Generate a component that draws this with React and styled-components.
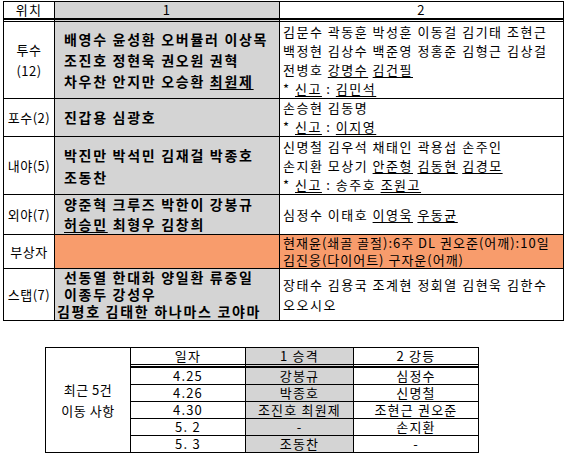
import React from "react";
import styled, { createGlobalStyle } from "styled-components";

const Global = createGlobalStyle`
  body {
    margin: 0;
    background: #fff;
    font-family: "Noto Sans CJK KR", "Noto Sans", sans-serif;
    color: #000;
  }
`;

const Page = styled.div`
  display: flex;
  flex-direction: column;
  align-items: flex-start;
  gap: 26px;
  padding: 1px 0 0 3px;
`;

const Table = styled.table`
  border-collapse: separate;
  border-spacing: 0;
  table-layout: fixed;
  width: ${(p) => p.$w}px;
  border-top: 1px solid #000;
  border-left: 1px solid #000;
  margin-left: ${(p) => p.$ml || 0}px;
  font-size: 13px;
  letter-spacing: 1.2px;
`;

const Row = styled.tr`
  height: ${(p) => p.$h}px;
`;

const Cell = styled.td`
  padding: 0;
  border-right: 1px solid #000;
  border-bottom: ${(p) => p.$bb || "1px solid #000"};
  background: ${(p) => p.$bg || "#fff"};
  vertical-align: middle;
  text-align: ${(p) => p.$align || "left"};
  line-height: ${(p) => p.$lh || 19}px;
  white-space: pre;
`;

const Gap = styled.td`
  padding: 0;
  height: 1px;
  font-size: 0;
  line-height: 0;
  border-right: 1px solid #000;
  border-bottom: ${(p) => p.$bb};
  background: ${(p) => p.$bg || "#fff"};
`;

const Pos = styled.div`
  text-align: center;
  letter-spacing: 0.5px;
  line-height: ${(p) => p.$lh || 19}px;
`;

const BoldLine = styled.div`
  font-weight: 700;
  font-size: 14px;
  letter-spacing: 1.7px;
  line-height: ${(p) => p.$lh || 21}px;
  padding-left: ${(p) => p.$pl ?? 9}px;
`;

const Line = styled.div`
  padding-left: 3px;
  letter-spacing: ${(p) => p.$ls ?? 1.5}px;
  line-height: ${(p) => p.$lh || 19}px;
`;

const U = styled.span`
  text-decoration: underline;
  text-underline-offset: 2px;
`;

const GRAY = "#d4d4d4";
const ORANGE = "#f89c6c";

const moves = [
  ["4.25", "강봉규", "심정수"],
  ["4.26", "박종호", "신명철"],
  ["4.30", "조진호 최원제", "조현근 권오준"],
  ["5. 2", "-", "손지환"],
  ["5. 3", "조동찬", "-"],
];

const App = () => {
  return (
    <>
      <Global />
      <Page>
        <Table $w={560}>
          <colgroup>
            <col style={{ width: 51 }} />
            <col style={{ width: 225 }} />
            <col style={{ width: 284 }} />
          </colgroup>
          <tbody>
            <Row $h={18}>
              <Cell $align="center" $lh={16} $bb="2px solid #000">위치</Cell>
              <Cell $align="center" $lh={16} $bg={GRAY} $bb="2px solid #000">1</Cell>
              <Cell $align="center" $lh={16} $bb="2px solid #000">2</Cell>
            </Row>
            <tr>
              <Gap $bb="1px solid #000" />
              <Gap $bb="1px solid #000" $bg={GRAY} />
              <Gap $bb="1px solid #000" />
            </tr>
            <Row $h={77}>
              <Cell>
                <Pos $lh={21}>투수</Pos>
                <Pos $lh={21}>(12)</Pos>
              </Cell>
              <Cell $bg={GRAY}>
                <BoldLine>배영수 윤성환 오버뮬러 이상목</BoldLine>
                <BoldLine>조진호 정현욱 권오원 권혁</BoldLine>
                <BoldLine>
                  차우찬 안지만 오승환 <U>최원제</U>
                </BoldLine>
              </Cell>
              <Cell>
                <Line>김문수 곽동훈 박성훈 이동걸 김기태 조현근</Line>
                <Line>백정현 김상수 백준영 정홍준 김형근 김상걸</Line>
                <Line>
                  전병호 <U>강명수</U> <U>김건필</U>
                </Line>
                <Line>
                  * <U>신고</U> : <U>김민석</U>
                </Line>
              </Cell>
            </Row>
            <Row $h={38}>
              <Cell>
                <Pos>포수(2)</Pos>
              </Cell>
              <Cell $bg={GRAY}>
                <BoldLine>진갑용 심광호</BoldLine>
              </Cell>
              <Cell>
                <Line $lh={18.5}>손승현 김동명</Line>
                <Line $lh={18.5}>
                  * <U>신고</U> : <U>이지영</U>
                </Line>
              </Cell>
            </Row>
            <Row $h={58}>
              <Cell>
                <Pos>내야(5)</Pos>
              </Cell>
              <Cell $bg={GRAY}>
                <BoldLine $lh={22}>박진만 박석민 김재걸 박종호</BoldLine>
                <BoldLine $lh={22}>조동찬</BoldLine>
              </Cell>
              <Cell>
                <Line>신명철 김우석 채태인 곽용섭 손주인</Line>
                <Line>
                  손지환 모상기 <U>안준형</U> <U>김동현</U> <U>김경모</U>
                </Line>
                <Line>
                  * <U>신고</U> : 송주호 <U>조원고</U>
                </Line>
              </Cell>
            </Row>
            <Row $h={40}>
              <Cell>
                <Pos>외야(7)</Pos>
              </Cell>
              <Cell $bg={GRAY}>
                <BoldLine $lh={19.5}>양준혁 크루즈 박한이 강봉규</BoldLine>
                <BoldLine $lh={19.5}>
                  <U>허승민</U> 최형우 김창희
                </BoldLine>
              </Cell>
              <Cell>
                <Line>
                  심정수 이태호 <U>이영욱</U> <U>우동균</U>
                </Line>
              </Cell>
            </Row>
            <Row $h={34}>
              <Cell>
                <Pos>부상자</Pos>
              </Cell>
              <Cell $bg={ORANGE} />
              <Cell $bg={ORANGE}>
                <Line $lh={16.5} $ls={1}>
                  현재윤(쇄골 골절):6주 DL 권오준(어깨):10일
                </Line>
                <Line $lh={16.5} $ls={1}>
                  김진웅(다이어트) 구자운(어깨)
                </Line>
              </Cell>
            </Row>
            <Row $h={52}>
              <Cell>
                <Pos>스탭(7)</Pos>
              </Cell>
              <Cell $bg={GRAY}>
                <BoldLine $lh={17}>선동열 한대화 양일환 류중일</BoldLine>
                <BoldLine $lh={17}>이종두 강성우</BoldLine>
                <BoldLine $lh={17} $pl={2}>
                  김평호 김태한 하나마스 코야마
                </BoldLine>
              </Cell>
              <Cell>
                <Line $lh={20}>장태수 김용국 조계현 정회열 김현욱 김한수</Line>
                <Line $lh={20}>오오시오</Line>
              </Cell>
            </Row>
          </tbody>
        </Table>

        <Table $w={433} $ml={42}>
          <colgroup>
            <col style={{ width: 85 }} />
            <col style={{ width: 115 }} />
            <col style={{ width: 108 }} />
            <col style={{ width: 125 }} />
          </colgroup>
          <tbody>
            <Row $h={17}>
              <Cell rowSpan={7} $align="center">
                <Pos $lh={21}>최근 5건</Pos>
                <Pos $lh={21}>이동 사항</Pos>
              </Cell>
              <Cell $align="center" $lh={16}>일자</Cell>
              <Cell $align="center" $lh={16} $bg={GRAY}>1 승격</Cell>
              <Cell $align="center" $lh={16}>2 강등</Cell>
            </Row>
            <tr>
              <Gap $bb="2px solid #000" />
              <Gap $bb="2px solid #000" $bg={GRAY} />
              <Gap $bb="2px solid #000" />
            </tr>
            {moves.map(([d, up, down]) => (
              <Row $h={17} key={d}>
                <Cell $align="center" $lh={16}>
                  {d}
                </Cell>
                <Cell $align="center" $lh={16} $bg={GRAY}>
                  {up}
                </Cell>
                <Cell $align="center" $lh={16}>
                  {down}
                </Cell>
              </Row>
            ))}
          </tbody>
        </Table>
      </Page>
    </>
  );
};

export default App;
